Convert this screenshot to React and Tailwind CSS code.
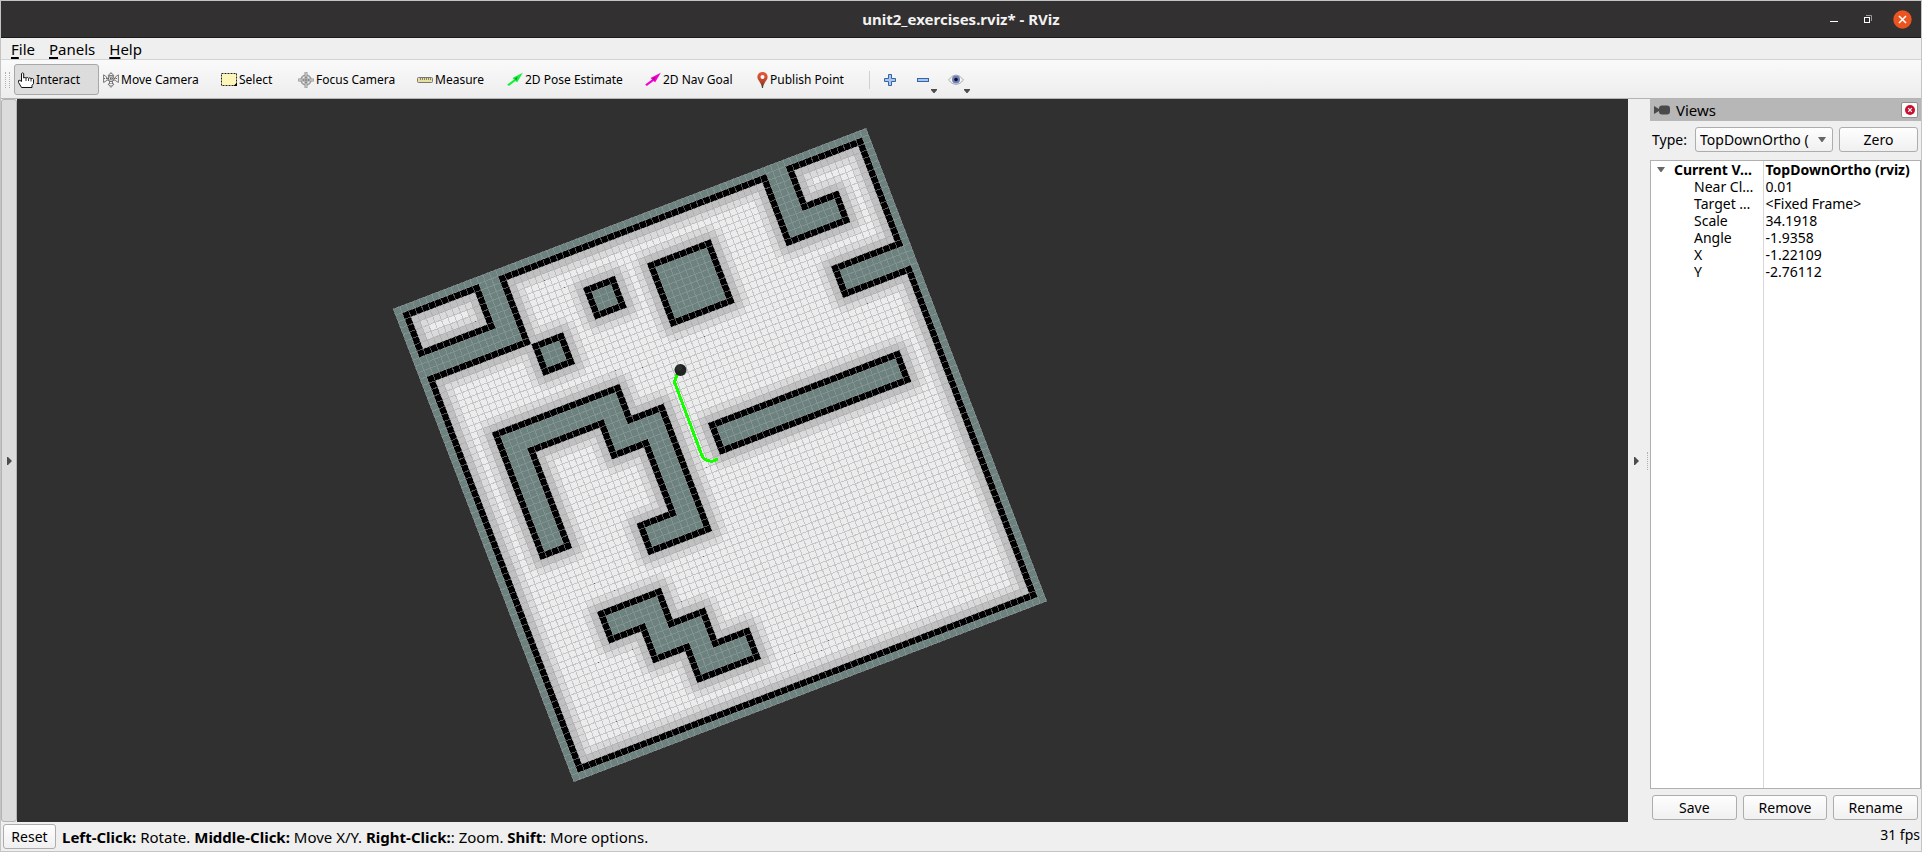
import React from "react";

/* ---------- Costmap ---------- */

const SIZE = 74;

// Free areas (x0, y0, x1, y1), end exclusive, in map cells.
const FREE = [
  [2, 2, 12, 7],
  [17, 2, 57, 72],
  [2, 12, 17, 72],
  [57, 12, 72, 72],
  [62, 2, 72, 12],
];

// Solid obstacles, including their outlines.
const SOLID = [
  [27, 7, 32, 12],
  [17, 12, 22, 17],
  [37, 7, 47, 17],
  [37, 32, 67, 37],
  [62, 7, 67, 12],
  [62, 17, 74, 22],
  [7, 22, 27, 27],
  [7, 22, 12, 42],
  [22, 22, 27, 32],
  [22, 27, 32, 32],
  [27, 27, 32, 47],
  [22, 42, 32, 47],
  [12, 52, 22, 57],
  [17, 52, 22, 62],
  [17, 57, 27, 62],
  [22, 57, 27, 67],
  [22, 62, 32, 67],
];

const within = (list, x, y) =>
  list.some(([x0, y0, x1, y1]) => x >= x0 && x < x1 && y >= y0 && y < y1);
const isFree = (x, y) => within(FREE, x, y) && !within(SOLID, x, y);

function cellColor(x, y) {
  if (!isFree(x, y)) {
    for (let dy = -1; dy <= 1; dy++)
      for (let dx = -1; dx <= 1; dx++) if (isFree(x + dx, y + dy)) return "#000000";
    return "#6b827f";
  }
  let best = 99;
  for (let dy = -2; dy <= 2; dy++)
    for (let dx = -2; dx <= 2; dx++)
      if (!isFree(x + dx, y + dy)) best = Math.min(best, dx * dx + dy * dy);
  if (best <= 1) return "#c0c0c0";
  if (best <= 2) return "#c9c9c9";
  if (best <= 4) return "#dadada";
  if (best <= 5) return "#dedede";
  return "#ececec";
}

function buildLayers() {
  const layers = {};
  for (let y = 0; y < SIZE; y++) {
    let x = 0;
    while (x < SIZE) {
      const color = cellColor(x, y);
      let end = x + 1;
      while (end < SIZE && cellColor(end, y) === color) end++;
      layers[color] = (layers[color] || "") + `M${x} ${y}H${end}V${y + 1}H${x}z`;
      x = end;
    }
  }
  return Object.entries(layers);
}

const LAYERS = buildLayers();
const GRID = Array.from({ length: SIZE + 1 }, (_, i) => `M${i} 0V${SIZE}M0 ${i}H${SIZE}`).join("");

function MapView() {
  return (
    <svg className="block h-full w-full" role="img" aria-label="Costmap">
      <g transform="matrix(6.388 -2.4406 2.4406 6.388 376.3 210)" shapeRendering="crispEdges">
        {LAYERS.map(([color, d]) => (
          <path key={color} d={d} fill={color} />
        ))}
        <path
          d={GRID}
          fill="none"
          stroke="#a0a0a4"
          strokeOpacity="0.5"
          strokeWidth="1"
          vectorEffect="non-scaling-stroke"
        />
      </g>
      <path
        d="M663 266L657.500 283L685.500 358L689 361L695 362.500L701 360"
        fill="none"
        stroke="#15ff00"
        strokeWidth="3"
        shapeRendering="crispEdges"
      />
      <circle cx="663.5" cy="271" r="6" fill="#1f2421" />
      <circle cx="662" cy="269" r="3" fill="#2b322e" />
    </svg>
  );
}

/* ---------- Icons ---------- */

const HandIcon = () => (
  <svg width="16" height="16" viewBox="0 0 16 16" className="shrink-0">
    <path
      d="M3.500 9.500V1.500Q4.500 .2 5.700 1.500V6Q7 5 8 6Q9.500 4.800 10.500 6.300Q12 5.200 13 6.600Q15 5.800 15.500 7.500V11.500L14 13.500V15.500H3.500L.6 10.500V8.500Q1.600 7.600 3.500 9.500Z"
      fill="#fff"
      stroke="#111"
    />
    <path d="M8 6V9M10.500 6.500V9M13 7V9.500" stroke="#333" fill="none" />
  </svg>
);

const MoveIcon = () => (
  <svg width="16" height="16" viewBox="0 0 16 16" className="shrink-0" fill="#fff" stroke="#777" strokeWidth="1">
    <path d="M8 .6L10.800 3.500H9.200V6.500H12.300V5L15.400 2.800V10.500L12.300 8.500V8H9.500V12H11L8 15.400L5 12H6.500V8H3.700V8.500L.6 10.500V2.800L3.700 5V6.500H6.800V3.500H5.200Z" fill="#f4f4f4" />
    <circle cx="8" cy="6.500" r="3" fill="#ddd" />
    <path d="M1 6.500H15M8 1V14M5.500 8.500L10.500 4.500M5.500 4.500L10.500 8.500" stroke="#666" strokeDasharray="1 1" fill="none" />
  </svg>
);

const SelectIcon = () => (
  <svg width="16" height="16" viewBox="0 0 16 16" className="shrink-0">
    <rect x=".5" y="1.500" width="15" height="12" fill="#fdf6b8" stroke="#222" strokeDasharray="2 1" />
    <path d="M16 10.500V14H12.500Z" fill="#000" />
  </svg>
);

const FocusIcon = () => (
  <svg width="16" height="16" viewBox="0 0 16 16" className="shrink-0" fill="none" stroke="#999">
    <circle cx="8" cy="8" r="5" strokeWidth="1.500" fill="#ececec" />
    <circle cx="8" cy="8" r="2.500" />
    <path d="M7 0V5H9V0ZM7 11V16H9V11ZM0 7V9H5V7ZM11 7V9H16V7Z" fill="#ddd" />
    <path d="M8 5V11M5 8H11" stroke="#777" />
  </svg>
);

const MeasureIcon = () => (
  <svg width="16" height="16" viewBox="0 0 16 16" className="shrink-0">
    <rect x=".5" y="5.500" width="15" height="5" rx="1" fill="#e8e0a0" stroke="#777" />
    <path d="M3.500 6V8M5.500 6V8M7.500 6V8M9.500 6V8M11.500 6V8M13.500 6V8" stroke="#8a8460" />
  </svg>
);

const ArrowIcon = ({ color }) => (
  <svg width="16" height="16" viewBox="0 0 16 16" className="shrink-0">
    <path d="M15.800 .8L5.500 6L7 7.500L.2 12.500L1.800 14L8.500 9L10.200 10.300Z" fill={color} />
    <path d="M7.500 6.500L10.500 4.800L9.500 8.500Z" fill="#222" fillOpacity=".45" />
  </svg>
);

const PinIcon = () => (
  <svg width="11" height="16" viewBox="0 0 11 16" className="shrink-0">
    <defs>
      <linearGradient id="pin" x1="0" y1="0" x2="0" y2="1">
        <stop offset="0" stopColor="#f0583a" />
        <stop offset=".6" stopColor="#b8442a" />
        <stop offset="1" stopColor="#3c3a20" />
      </linearGradient>
    </defs>
    <path d="M5.500 0C2.300 0 .4 2.300 .4 5C.4 8.500 4.500 10.500 5 16H6C6.500 10.500 10.600 8.500 10.600 5C10.600 2.300 8.700 0 5.500 0Z" fill="url(#pin)" />
    <circle cx="5.500" cy="5" r="2" fill="#fff" />
  </svg>
);

const PlusIcon = () => (
  <svg width="12" height="12" viewBox="0 0 12 12">
    <path d="M4.500 .5H7.500V4.500H11.500V7.500H7.500V11.500H4.500V7.500H.5V4.500H4.500Z" fill="#a9c6ea" stroke="#3465a4" />
  </svg>
);

const MinusIcon = () => (
  <svg width="12" height="12" viewBox="0 0 12 12">
    <rect x=".5" y="4.500" width="11" height="3" fill="#a9c6ea" stroke="#3465a4" />
  </svg>
);

const EyeIcon = () => (
  <svg width="16" height="12" viewBox="0 0 16 12">
    <path d="M.5 6Q4 1 8 1T15.500 6Q12 10.500 8 10.500T.5 6Z" fill="#f4f4f4" stroke="#aaa" />
    <circle cx="8" cy="5.500" r="4" fill="#6d80bd" />
    <circle cx="8" cy="5.500" r="1.800" fill="#111" />
  </svg>
);

const Caret = () => (
  <svg width="6" height="4" viewBox="0 0 6 4">
    <path d="M0 0H6V1L3.500 4H2.500L0 1Z" fill="#4d4d4d" />
  </svg>
);

const CollapseArrow = () => (
  <svg width="5" height="8" viewBox="0 0 5 8">
    <path d="M0 0H1L5 4L1 8H0Z" fill="#4d4d4d" />
  </svg>
);

/* ---------- Toolbar ---------- */

const TOOLS = [
  { label: "Interact", icon: <HandIcon />, width: "w-[85px]", active: true },
  { label: "Move Camera", icon: <MoveIcon />, width: "w-[118px]" },
  { label: "Select", icon: <SelectIcon />, width: "w-[77px]" },
  { label: "Focus Camera", icon: <FocusIcon />, width: "w-[119px]" },
  { label: "Measure", icon: <MeasureIcon />, width: "w-[90px]" },
  { label: "2D Pose Estimate", icon: <ArrowIcon color="#12f03a" />, width: "w-[138px]" },
  { label: "2D Nav Goal", icon: <ArrowIcon color="#f500d0" />, width: "w-[112px]" },
  { label: "Publish Point", icon: <PinIcon />, width: "w-[116px]" },
];

function Toolbar() {
  return (
    <div className="flex h-[39px] shrink-0 items-center border-b border-[#b4b4b4] bg-linear-to-b from-[#fafafa] to-[#ededed] pt-px pl-1 text-[12px]">
      <div className="mr-1 flex w-[5px] justify-between">
        <span className="h-4 w-px border-l border-dotted border-[#b0b0b0]" />
        <span className="h-4 w-px border-l border-dotted border-[#b0b0b0]" />
      </div>
      {TOOLS.map((t) => (
        <button
          key={t.label}
          aria-pressed={!!t.active}
          className={`flex h-[31px] items-center gap-[2px] rounded-[3px] border pl-[3px] whitespace-nowrap ${t.width} ${
            t.active ? "border-[#a8a8a8] bg-[#dcdcdc]" : "border-transparent"
          }`}
        >
          {t.icon}
          {t.label}
        </button>
      ))}
      <span className="mr-[14px] h-[18px] w-px bg-[#d0d0d0]" />
      <button aria-label="Add tool" className="mr-[21px]">
        <PlusIcon />
      </button>
      <button aria-label="Remove tool" className="relative mr-[19px]">
        <MinusIcon />
        <span className="absolute top-[15px] left-[14px]">
          <Caret />
        </span>
      </button>
      <button aria-label="Tool visibility" className="relative">
        <EyeIcon />
        <span className="absolute top-[15px] left-[16px]">
          <Caret />
        </span>
      </button>
    </div>
  );
}

/* ---------- Views panel ---------- */

const PROPS = [
  ["Near Cl…", "0.01"],
  ["Target …", "<Fixed Frame>"],
  ["Scale", "34.1918"],
  ["Angle", "-1.9358"],
  ["X", "-1.22109"],
  ["Y", "-2.76112"],
];

const BUTTON =
  "h-[25px] rounded-[3px] border border-[#adadad] bg-linear-to-b from-[#fefefe] to-[#f0f0f0] text-center leading-[20px]";

function ViewsPanel() {
  return (
    <aside className="flex w-[271px] shrink-0 flex-col text-[14px]">
      <header className="flex h-[22px] shrink-0 items-center bg-[#b7b7b7] pr-[3px] pl-1">
        <svg width="16" height="10" viewBox="0 0 16 10">
          <path d="M0 1L5 4V6L0 9Z" fill="#4a4a4a" />
          <rect x="5" y=".5" width="11" height="9" rx="3" fill="#4a4a4a" />
        </svg>
        <h2 className="ml-[6px] text-[15px] leading-[22px]">Views</h2>
        <button
          aria-label="Close"
          className="ml-auto flex h-4 w-[17px] items-center justify-center rounded-[2px] border border-[#8f8f8f] bg-[#fbfbfb]"
        >
          <svg width="10" height="10" viewBox="0 0 10 10">
            <circle cx="5" cy="5" r="5" fill="#c8102e" />
            <path d="M3.200 3.200L6.800 6.800M6.800 3.200L3.200 6.800" stroke="#fff" strokeWidth="1.200" />
          </svg>
        </button>
      </header>
      <div className="mt-[6px] flex h-[25px] shrink-0 items-center pr-[3px] pl-[2px]">
        <label htmlFor="view-type" className="w-[43px]">
          Type:
        </label>
        <div className="relative w-[138px]">
          <select
            id="view-type"
            className="block h-[25px] w-full appearance-none rounded-[3px] border border-[#adadad] bg-linear-to-b from-[#fefefe] to-[#f0f0f0] pr-[23px] pl-1"
          >
            <option>TopDownOrtho (rviz)</option>
          </select>
          <span className="pointer-events-none absolute top-0 right-[7px] flex h-full items-center">
            <svg width="8" height="5" viewBox="0 0 8 5">
              <path d="M0 0H8L4.500 5H3.500Z" fill="#666" />
            </svg>
          </span>
        </div>
        <button className={`ml-[6px] flex-1 ${BUTTON}`}>Zero</button>
      </div>
      <div className="mt-[8px] min-h-0 flex-1 border border-[#b0b0b0] bg-white">
        <table className="h-full w-full table-fixed border-collapse text-left leading-[17px]">
          <colgroup>
            <col className="w-[112px]" />
            <col />
          </colgroup>
          <tbody>
            <tr className="h-[17px] font-bold">
              <td className="border-r border-[#d8d8d8] p-0 pl-[6px] whitespace-nowrap">
                <div className="flex items-center">
                  <svg width="8" height="5" viewBox="0 0 8 5" className="mr-[9px] shrink-0">
                    <path d="M0 0H8L4.500 5H3.500Z" fill="#666" />
                  </svg>
                  <span>Current V…</span>
                </div>
              </td>
              <td className="p-0 pl-[2px] whitespace-nowrap">TopDownOrtho (rviz)</td>
            </tr>
            {PROPS.map(([name, value]) => (
              <tr key={name} className="h-[17px]">
                <td className="border-r border-[#d8d8d8] p-0 pl-[43px] whitespace-nowrap">{name}</td>
                <td className="p-0 pl-[2px] whitespace-nowrap">{value}</td>
              </tr>
            ))}
            <tr>
              <td className="border-r border-[#d8d8d8] p-0" />
              <td className="p-0" />
            </tr>
          </tbody>
        </table>
      </div>
      <div className="mt-[6px] mb-[2px] grid shrink-0 grid-cols-3 gap-[6px] pr-[3px] pl-[2px]">
        <button className={BUTTON}>Save</button>
        <button className={BUTTON}>Remove</button>
        <button className={BUTTON}>Rename</button>
      </div>
    </aside>
  );
}

/* ---------- Window ---------- */

export default function App() {
  return (
    <div className="flex h-screen flex-col overflow-hidden border border-[#c4c4c4] bg-[#efefef] font-['Noto_Sans',sans-serif] text-black">
      <header className="grid h-[37px] shrink-0 grid-cols-[1fr_auto_1fr] items-center border-b border-[#1c1b1b] bg-[#323030] text-white">
        <span />
        <h1 className="text-[15px] leading-[22px] font-bold text-[#f2f2f2]">unit2_exercises.rviz* - RViz</h1>
        <div className="flex items-center justify-end pr-[9px]">
          <button aria-label="Minimize" className="mr-[26px]">
            <svg width="8" height="8" viewBox="0 0 8 8">
              <path d="M0 6.500H8" stroke="#fff" />
            </svg>
          </button>
          <button aria-label="Restore" className="mr-[21px]">
            <svg width="8" height="8" viewBox="0 0 8 8" fill="none">
              <path d="M2 .5H7.500V6" stroke="#999" />
              <rect x=".5" y="2.500" width="5" height="5" stroke="#fff" />
            </svg>
          </button>
          <button aria-label="Close window">
            <svg width="19" height="19" viewBox="0 0 19 19">
              <circle cx="9.500" cy="9.500" r="9.200" fill="#e95420" />
              <path d="M6 6L13 13M13 6L6 13" stroke="#fff" strokeWidth="1.500" />
            </svg>
          </button>
        </div>
      </header>

      <nav className="flex h-[22px] shrink-0 items-center gap-[14px] border-b border-[#d3d3d3] pl-[10px] text-[15px] leading-[22px]">
        {["File", "Panels", "Help"].map((m) => (
          <button key={m}>
            <span className="underline decoration-2 underline-offset-2">{m[0]}</span>
            {m.slice(1)}
          </button>
        ))}
      </nav>

      <Toolbar />

      <main className="flex min-h-0 flex-1">
        <button
          aria-label="Toggle left panel"
          className="flex w-4 shrink-0 items-center justify-center rounded-[3px] border border-[#b4b4b4] bg-[#dcdcdc]"
        >
          <CollapseArrow />
        </button>
        <section className="min-w-0 flex-1 bg-[#303030]">
          <MapView />
        </section>
        <button aria-label="Toggle right panel" className="flex w-4 shrink-0 items-center justify-center">
          <CollapseArrow />
        </button>
        <div className="flex w-[6px] shrink-0 items-center pl-[3px]">
          <span className="h-[18px] w-px border-l border-dotted border-[#b0b0b0]" />
        </div>
        <ViewsPanel />
      </main>

      <footer className="flex h-[29px] shrink-0 items-center pl-[2px] text-[14px] leading-[20px]">
        <button className={`w-[53px] ${BUTTON}`}>Reset</button>
        <p className="ml-[6px] text-[15px]">
          <b>Left-Click:</b> Rotate. <b>Middle-Click:</b> Move X/Y. <b>Right-Click:</b>: Zoom. <b>Shift</b>: More options.
        </p>
        <span className="mb-[4px] ml-auto pr-px">31 fps</span>
      </footer>
    </div>
  );
}
